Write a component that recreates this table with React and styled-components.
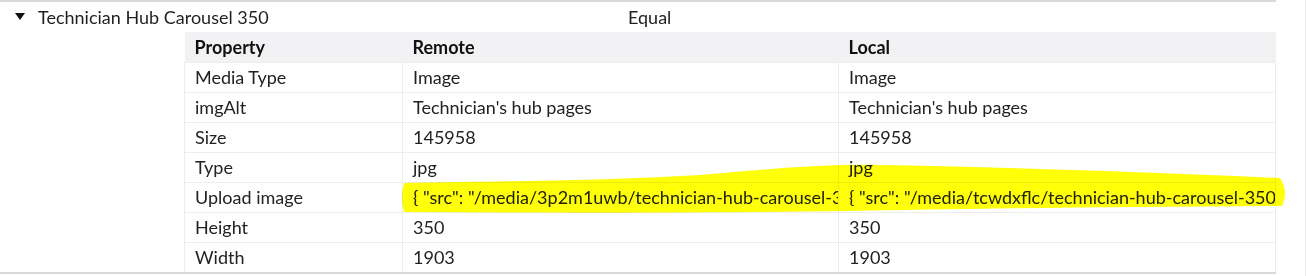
import styled, { createGlobalStyle } from 'styled-components';

const GlobalStyle = createGlobalStyle`
  html, body {
    margin: 0;
    padding: 0;
    background: #ffffff;
  }
  body {
    font-family: Lato, "Open Sans", Arial, sans-serif;
    color: #1f1f24;
  }
`;

const Page = styled.div`
  width: 1306px;
  height: 276px;
  border-right: 1px solid #ececec;
  box-sizing: border-box;
  overflow: hidden;
`;

const Panel = styled.div`
  position: relative;
  width: 1276px;
  border-top: 2px solid #d9d9d9;
  border-bottom: 2px solid #d9d9d9;
`;

const Header = styled.div`
  display: grid;
  grid-template-columns: 38px 590px auto;
  align-items: center;
  height: 30px;
  font-size: 18px;
  line-height: 28px;
`;

const Caret = styled.span`
  justify-self: start;
  margin-left: 15px;
  margin-top: -2px;
  width: 0;
  height: 0;
  border-left: 5px solid transparent;
  border-right: 5px solid transparent;
  border-top: 7px solid #111;
`;

const Status = styled.span`
  color: #222;
`;

const Table = styled.table`
  margin-left: 184px;
  width: 1091px;
  border-collapse: collapse;
  table-layout: fixed;
  font-size: 18px;
`;

const Col = styled.col`
  width: ${(p) => p.$w}px;
`;

const HeadCell = styled.th`
  height: 29px;
  padding: 0 0 1px 10px;
  text-align: left;
  font-weight: 700;
  background: #f2f2f4;
  color: #111;
  white-space: nowrap;
  overflow: hidden;
`;

const Cell = styled.td`
  height: 28px;
  padding: 0 0 1px 10px;
  border: 1px solid #ededed;
  border-bottom: none;
  white-space: nowrap;
  overflow: hidden;
  text-overflow: clip;
  color: #222;
`;

const Highlight = styled.svg`
  position: absolute;
  left: 0;
  top: -2px;
  width: 1307px;
  height: 276px;
  pointer-events: none;
  mix-blend-mode: multiply;
`;

const rows = [
  ['Media Type', 'Image', 'Image'],
  ['imgAlt', "Technician's hub pages", "Technician's hub pages"],
  ['Size', '145958', '145958'],
  ['Type', 'jpg', 'jpg'],
  [
    'Upload image',
    '{ "src": "/media/3p2m1uwb/technician-hub-carousel-350.jpg" }',
    '{ "src": "/media/tcwdxflc/technician-hub-carousel-350.jpg" }',
  ],
  ['Height', '350', '350'],
  ['Width', '1903', '1903'],
];

export default function App() {
  return (
    <Page>
      <GlobalStyle />
      <Panel>
        <Header>
          <Caret />
          <span>Technician Hub Carousel 350</span>
          <Status>Equal</Status>
        </Header>
        <Table>
          <colgroup>
            <Col $w={218} />
            <Col $w={436} />
            <Col $w={437} />
          </colgroup>
          <thead>
            <tr>
              <HeadCell>Property</HeadCell>
              <HeadCell>Remote</HeadCell>
              <HeadCell>Local</HeadCell>
            </tr>
          </thead>
          <tbody>
            {rows.map(([name, remote, local]) => (
              <tr key={name}>
                <Cell>{name}</Cell>
                <Cell>{remote}</Cell>
                <Cell>{local}</Cell>
              </tr>
            ))}
          </tbody>
        </Table>
        {/* hand-drawn highlighter mark over the Upload image row */}
        <Highlight viewBox="0 0 1307 276">
          <path
            d="M404,183 C500,181 600,181 700,175 C780,168 830,164 880,165 C1000,167 1150,172 1280,178 Q1289,192 1282,206 C1100,207 950,209 850,211 C700,213 550,213 404,212 Q400,197 404,183 Z"
            fill="#ffff0a"
          />
        </Highlight>
      </Panel>
    </Page>
  );
}
